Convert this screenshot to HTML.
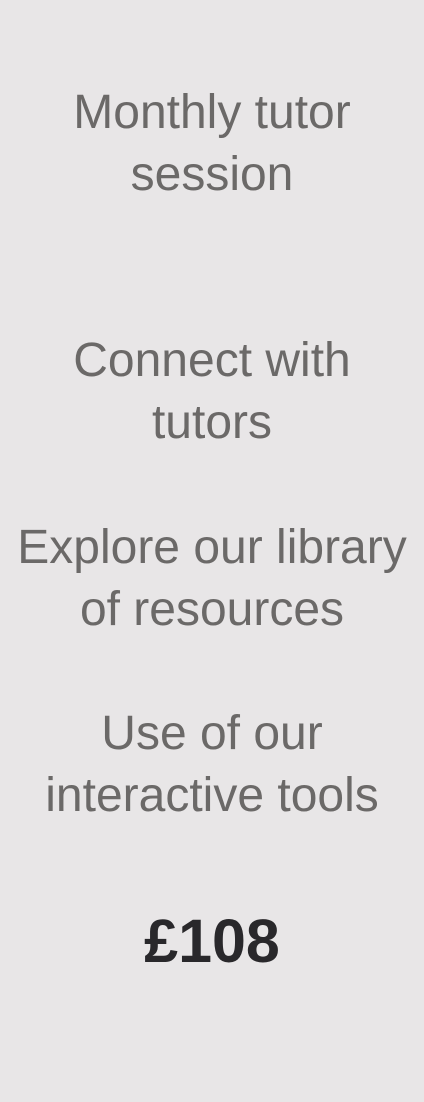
<!DOCTYPE html>
<html><head><style>
html,body{margin:0;padding:0;width:424px;height:1102px;background:#e8e6e7;overflow:hidden}
.t{position:absolute;left:0;width:424px;text-align:center;font-family:"Liberation Sans",Arial,sans-serif;font-size:48px;line-height:62px;color:#6b6968;white-space:nowrap}
.p{position:absolute;left:0;width:424px;text-align:center;font-family:"Liberation Sans",Arial,sans-serif;font-size:61px;font-weight:bold;line-height:70px;color:#29282b;top:906px}
</style></head><body>
<div class="t" style="top:82px">Monthly tutor<br>session</div>
<div class="t" style="top:330px">Connect with<br>tutors</div>
<div class="t" style="top:517px">Explore our library<br>of resources</div>
<div class="t" style="top:703px">Use of our<br>interactive tools</div>
<div class="p">£108</div>
</body></html>
